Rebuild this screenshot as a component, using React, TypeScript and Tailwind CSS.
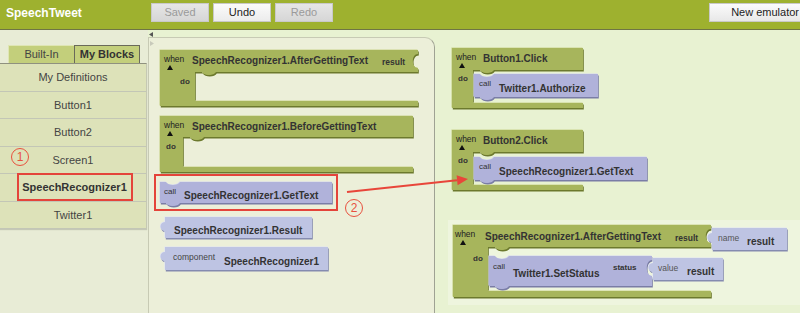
import React from "react";

type Tone = "event" | "call" | "value";

const tones: Record<Tone, { fill: string; dark: string; light: string }> = {
  event: { fill: "#a7b55c", dark: "#6c792d", light: "#c9d38e" },
  call: { fill: "#b0b2da", dark: "#7a7da6", light: "#d4d6ef" },
  value: { fill: "#bec4e3", dark: "#858bb0", light: "#e0e3f4" },
};

// event block: header, left column, inner slot, bottom bar
const eventPath = (w: number, hh: number, cl: number, ih: number, bh: number, socket = false) => {
  const right = socket ? `V4 C${w - 7},4 ${w - 7},${hh - 4} ${w},${hh - 4} ` : "";
  return `M0,0 H${w} ${right}V${hh} H${cl + 21} C${cl + 19},${hh + 4} ${cl + 9},${hh + 4} ${cl + 7},${hh} H${cl} V${hh + ih} H${w} V${hh + ih + bh} H0 Z`;
};

const callPath = (w: number, h: number, socket = false) => {
  const right = socket ? `V4 C${w - 7},4 ${w - 7},20 ${w},20 ` : "";
  return `M0,0 H6 C8,4 18,4 20,0 H${w} ${right}V${h} H20 C18,${h + 4} 8,${h + 4} 6,${h} H0 Z`;
};

const valuePath = (w: number, h: number) => `M0,0 H${w} V${h} H0 V14 C-6,14 -6,5 0,5 Z`;

function Block({
  className,
  d,
  w,
  h,
  tone,
  children,
}: {
  className: string;
  d: string;
  w: number;
  h: number;
  tone: Tone;
  children?: React.ReactNode;
}) {
  const t = tones[tone];
  return (
    <div className={`shrink-0 ${className}`}>
      <svg width={w} height={h} className="block overflow-visible">
        <path d={d} fill={t.dark} transform="translate(0.8,1.6)" />
        <path d={d} fill={t.light} transform="translate(-0.6,-0.6)" />
        <path d={d} fill={t.fill} />
      </svg>
      {children}
    </div>
  );
}

const Tri = () => (
  <svg width="6" height="5" className="absolute left-[7px] top-[15px]">
    <path d="M3,0 L6,5 L0,5 Z" fill="#111" />
  </svg>
);

const items = ["My Definitions", "Button1", "Button2", "Screen1", "SpeechRecognizer1", "Twitter1"];

export default function App() {
  return (
    <div className="w-[800px] h-[313px] overflow-hidden flex flex-col font-['Liberation_Sans',Arial,sans-serif] text-[#333]">
      <header className="h-[30px] shrink-0 bg-[#9eb12f] border-b border-[#6f7544] flex items-start pt-[3px]">
        <div className="w-[151px] shrink-0 h-[19px] pl-[6px] flex items-center text-white font-bold text-[12px]">
          SpeechTweet
        </div>
        <div className="flex gap-[4px] shrink-0">
          <button className="w-[58px] h-[19px] bg-gradient-to-b from-[#e6e6e6] to-[#d6d6d6] border border-[#c9c9c9] text-[11px] text-[#9a9a9a]">
            Saved
          </button>
          <button className="w-[58px] h-[19px] bg-gradient-to-b from-[#fbfbfb] to-[#ececec] border border-[#c9c9c9] text-[11px] text-[#222]">
            Undo
          </button>
          <button className="w-[58px] h-[19px] bg-gradient-to-b from-[#e6e6e6] to-[#d6d6d6] border border-[#c9c9c9] text-[11px] text-[#9a9a9a]">
            Redo
          </button>
        </div>
        <button className="ml-auto shrink-0 w-[91px] h-[19px] flex items-center justify-end pr-[1px] bg-gradient-to-b from-[#fbfbfb] to-[#e8e8e8] border border-r-0 border-[#c9c9c9] text-[11px] text-[#222] whitespace-nowrap">
          New emulator
        </button>
      </header>

      <div className="flex flex-1 min-h-0">
        <aside className="w-[148px] shrink-0 bg-[#e8ecd6] relative pt-[15px]">
          <div className="flex pl-[8px] h-[18px]">
            <div className="w-[66px] bg-[#c3cf7b] border-t border-l border-[#dfe6b4] text-[11px] text-[#444] flex items-center justify-center">
              Built-In
            </div>
            <div className="w-[66px] bg-[#c3cf7b] border border-b-0 border-[#6a6a5a] text-[11px] font-bold text-[#333] flex items-center justify-center">
              My Blocks
            </div>
          </div>
          <ul className="w-[147px] border-t border-[#8f917f] border-r border-r-[#c5c8b3] shadow-[0_1px_1px_rgba(0,0,0,0.15)]">
            {items.map((name) => (
              <li
                key={name}
                className="h-[27.5px] bg-[#dde2b9] border-b border-[#c3c6b6] flex items-center justify-center text-[11px] text-[#444]"
              >
                {name === "SpeechRecognizer1" ? (
                  <span className="ml-[3px] w-[116px] h-[28px] shrink-0 border-2 border-[#e4443a] flex items-center justify-center font-bold text-[#333]">
                    {name}
                  </span>
                ) : (
                  name
                )}
              </li>
            ))}
          </ul>
          <div className="absolute left-[11px] top-[118px] w-[18px] h-[18px] rounded-full border-[1.5px] border-[#e8513f] text-[#e8513f] text-[12px] leading-none flex items-center justify-center">
            1
          </div>
        </aside>

        <div className="flex-1 relative flex bg-[#e8f2d2]">
          {/* drawer with the component's blocks */}
          <div className="w-[287px] shrink-0 mt-[7px] relative flex flex-col items-start pl-[11px] pt-[12px] bg-[#ecefd9] border-t border-l border-r border-[#c7cab4] border-r-[#9fa293] rounded-tr-[10px]">
            <Block className="relative" d={eventPath(258, 22, 35, 29, 5, true)} w={258} h={56} tone="event">
              <span className="absolute left-[4px] top-[5px] text-[8.5px] leading-none text-[#222]">when</span>
              <Tri />
              <span className="absolute left-[32px] top-[6px] text-[10px] font-bold leading-none whitespace-nowrap">
                SpeechRecognizer1.AfterGettingText
              </span>
              <span className="absolute left-[222px] top-[8px] text-[8.5px] font-bold leading-none">result</span>
              <span className="absolute left-[20px] top-[28px] text-[8px] font-bold leading-none">do</span>
            </Block>

            <Block className="relative mt-[10px]" d={eventPath(253, 21, 23, 30, 5)} w={253} h={56} tone="event">
              <span className="absolute left-[4px] top-[5px] text-[8.5px] leading-none text-[#222]">when</span>
              <Tri />
              <span className="absolute left-[32px] top-[6px] text-[10px] font-bold leading-none whitespace-nowrap">
                SpeechRecognizer1.BeforeGettingText
              </span>
              <span className="absolute left-[6px] top-[27px] text-[8px] font-bold leading-none">do</span>
            </Block>

            <div className="relative mt-[2px] -ml-[6px] w-[184px] h-[37px] shrink-0 border-2 border-[#e4443a] pl-[4px] pt-[6px]">
              <Block className="relative" d={callPath(172, 21)} w={172} h={21} tone="call">
                <span className="absolute left-[4px] top-[6px] text-[8px] leading-none text-[#333]">call</span>
                <span className="absolute left-[24px] top-[9px] text-[10px] font-bold leading-none whitespace-nowrap">
                  SpeechRecognizer1.GetText
                </span>
              </Block>
              <div className="absolute left-[189px] top-[23px] w-[18px] h-[18px] rounded-full border-[1.5px] border-[#e8513f] text-[#e8513f] text-[12px] leading-none flex items-center justify-center">
                2
              </div>
            </div>

            <Block className="relative mt-[6px] ml-[5px]" d={valuePath(147, 21)} w={147} h={21} tone="value">
              <span className="absolute left-[9px] top-[9px] text-[10px] font-bold leading-none whitespace-nowrap">
                SpeechRecognizer1.Result
              </span>
            </Block>

            <Block className="relative mt-[9px] ml-[5px]" d={valuePath(163, 23)} w={163} h={23} tone="value">
              <span className="absolute left-[8px] top-[6px] text-[8.5px] leading-none text-[#444]">component</span>
              <span className="absolute left-[59px] top-[10px] text-[10px] font-bold leading-none whitespace-nowrap">
                SpeechRecognizer1
              </span>
            </Block>
          </div>

          {/* workspace canvas */}
          <div className="flex-1 relative">
            <div className="absolute left-[13px] top-[190px] w-[352px] h-[85px] bg-[#eef5de]" />

            <Block className="absolute left-[17px] top-[18px]" d={eventPath(131, 22, 21, 33, 5)} w={131} h={60} tone="event">
              <span className="absolute left-[4px] top-[5px] text-[8.5px] leading-none text-[#222]">when</span>
              <Tri />
              <span className="absolute left-[31px] top-[6px] text-[10px] font-bold leading-none whitespace-nowrap">Button1.Click</span>
              <span className="absolute left-[6px] top-[27px] text-[8px] font-bold leading-none">do</span>
              <Block className="absolute left-[22px] top-[26px]" d={callPath(124, 23)} w={124} h={23} tone="call">
                <span className="absolute left-[5px] top-[6px] text-[8px] leading-none">call</span>
                <span className="absolute left-[25px] top-[10px] text-[10px] font-bold leading-none whitespace-nowrap">
                  Twitter1.Authorize
                </span>
              </Block>
            </Block>

            <Block className="absolute left-[17px] top-[100px]" d={eventPath(131, 22, 21, 33, 5)} w={131} h={60} tone="event">
              <span className="absolute left-[4px] top-[5px] text-[8.5px] leading-none text-[#222]">when</span>
              <Tri />
              <span className="absolute left-[31px] top-[6px] text-[10px] font-bold leading-none whitespace-nowrap">Button2.Click</span>
              <span className="absolute left-[6px] top-[27px] text-[8px] font-bold leading-none">do</span>
              <Block className="absolute left-[22px] top-[27px]" d={callPath(173, 23)} w={173} h={23} tone="call">
                <span className="absolute left-[5px] top-[6px] text-[8px] leading-none">call</span>
                <span className="absolute left-[25px] top-[10px] text-[10px] font-bold leading-none whitespace-nowrap">
                  SpeechRecognizer1.GetText
                </span>
              </Block>
            </Block>

            <Block className="absolute left-[18px] top-[195px]" d={eventPath(258, 22, 35, 44, 6, true)} w={258} h={72} tone="event">
              <span className="absolute left-[2px] top-[5px] text-[8.5px] leading-none text-[#222]">when</span>
              <Tri />
              <span className="absolute left-[32px] top-[7px] text-[10px] font-bold leading-none whitespace-nowrap">
                SpeechRecognizer1.AfterGettingText
              </span>
              <span className="absolute left-[222px] top-[9px] text-[8.5px] font-bold leading-none">result</span>
              <span className="absolute left-[20px] top-[30px] text-[8px] font-bold leading-none">do</span>
              <Block className="absolute left-[259px] top-[3px]" d={valuePath(75, 22)} w={75} h={22} tone="value">
                <span className="absolute left-[6px] top-[6px] text-[8.5px] leading-none text-[#555]">name</span>
                <span className="absolute left-[35px] top-[9px] text-[10px] font-bold leading-none">result</span>
              </Block>
              <Block className="absolute left-[36px] top-[31px]" d={callPath(163, 30, true)} w={163} h={30} tone="call">
                <span className="absolute left-[4px] top-[7px] text-[8px] leading-none">call</span>
                <span className="absolute left-[24px] top-[13px] text-[10px] font-bold leading-none whitespace-nowrap">
                  Twitter1.SetStatus
                </span>
                <span className="absolute left-[124px] top-[8px] text-[8px] font-bold leading-none">status</span>
              </Block>
              <Block className="absolute left-[200px] top-[33px]" d={valuePath(70, 22)} w={70} h={22} tone="value">
                <span className="absolute left-[5px] top-[6px] text-[8.5px] leading-none text-[#555]">value</span>
                <span className="absolute left-[34px] top-[9px] text-[10px] font-bold leading-none">result</span>
              </Block>
            </Block>
          </div>

          <svg width="6" height="6" className="absolute left-[1px] top-[2px]">
            <path d="M4,0 L4,5 L0,2.5 Z" fill="#555" />
          </svg>
          <svg width="6" height="6" className="absolute left-[2px] top-[11px]">
            <path d="M0,0 L0,5 L4,2.5 Z" fill="#c8cabb" />
          </svg>

          {/* annotation arrow from the drawer to the workspace */}
          <svg width="652" height="283" className="absolute left-0 top-0 pointer-events-none">
            <line x1="199" y1="162" x2="309" y2="150.2" stroke="#e8463a" strokeWidth="2" />
            <polygon points="320,149 309.6,155.2 308.6,145.2" fill="#e8463a" />
          </svg>
        </div>
      </div>
    </div>
  );
}
